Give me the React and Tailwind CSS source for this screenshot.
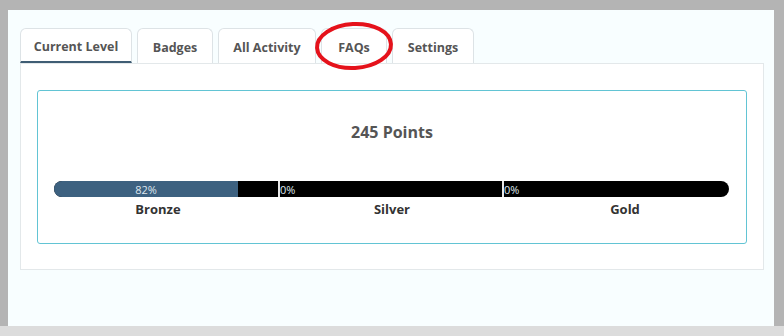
import React from 'react';

const tabs = [
  { label: 'Current Level', w: 'w-[112px]', active: true },
  { label: 'Badges', w: 'w-[76px]' },
  { label: 'All Activity', w: 'w-[98px]' },
  { label: 'FAQs', w: 'w-[66px]' },
  { label: 'Settings', w: 'w-[82px]' },
];

const font = { fontFamily: '"Open Sans", "Noto Sans", Arial, sans-serif' };

export default function App() {
  return (
    <div className="w-[784px] h-[336px] bg-[#b4b4b4] flex flex-col" style={font}>
      <div className="flex h-[326px] pt-[10px] pl-[8px] pr-[10px]">
        <div className="relative flex-1 bg-[#f8feff] pl-[12px] pt-[18px]">
          {/* Tabs */}
          <div className="flex gap-[5px] h-[35px]">
            {tabs.map((t) => (
              <div
                key={t.label}
                className={`${t.w} flex items-center justify-center pt-[5px] rounded-t-[6px] border border-[#dde3e6] bg-white text-[12.5px] font-bold text-[#555] ${
                  t.active ? 'border-b-2 border-b-[#3f5d74] bg-white' : 'border-b-0'
                }`}
              >
                {t.label}
              </div>
            ))}
          </div>

          {/* Panel */}
          <div className="w-[744px] h-[207px] border border-[#e3e8ea] bg-white pl-[16px] pt-[26px]">
            <div className="w-[710px] h-[154px] rounded-[3px] border border-[#62c4d4] px-[16px] flex flex-col">
              <div className="mt-[29px] text-center text-[16px] font-bold text-[#555]">245 Points</div>

              {/* Progress bar */}
              <div className="relative mt-[37px] h-[16px] w-[675px] rounded-full bg-black overflow-hidden">
                <div className="absolute left-0 top-0 h-full w-[184px] bg-[#3d6180] flex items-center justify-center text-[11px] leading-none text-[#dfe7ee]">
                  82%
                </div>
                <div className="absolute left-[224px] top-0 h-full flex items-center">
                  <div className="h-full w-[2px] bg-[#e8e8e8]" />
                  <span className="text-[11px] leading-none text-[#dfe7ee]">0%</span>
                </div>
                <div className="absolute left-[448px] top-0 h-full flex items-center">
                  <div className="h-full w-[2px] bg-[#e8e8e8]" />
                  <span className="text-[11px] leading-none text-[#dfe7ee]">0%</span>
                </div>
              </div>

              <div className="-mx-[16px] mt-[3px] grid grid-cols-3 text-center text-[13px] font-bold text-[#333]">
                <span className="pl-[4px]">Bronze</span>
                <span>Silver</span>
                <span className="pr-[6px]">Gold</span>
              </div>
            </div>
          </div>

          {/* red annotation */}
          <svg className="absolute left-[304px] top-[10px]" width="92" height="54" viewBox="0 0 92 54">
            <ellipse cx="42" cy="26" rx="37" ry="22" fill="none" stroke="#e5121b" strokeWidth="4" transform="rotate(-3 42 26)" />
          </svg>
        </div>
      </div>
      <div className="h-[10px] bg-[#dcdcdc]" />
    </div>
  );
}
